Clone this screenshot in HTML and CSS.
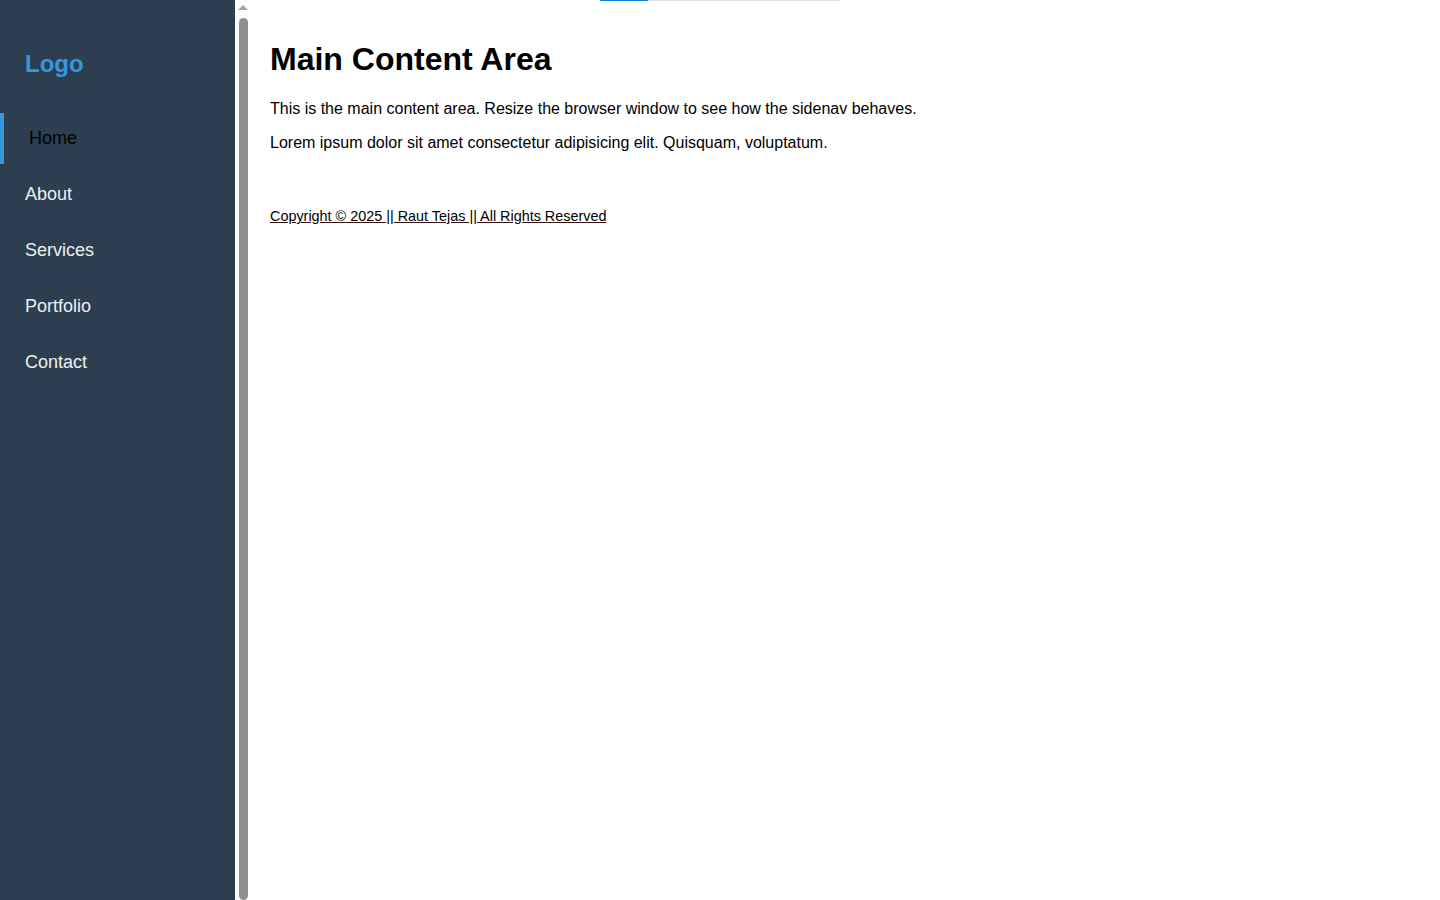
FILE: index.html
```html
<!DOCTYPE html>
<html lang="en">
<head>
<meta charset="UTF-8">
<title>Sidenav</title>
<link rel="stylesheet" href="styles.css">
</head>
<body>
<div class="progress"><span class="progress-fill"></span></div>
<aside class="sidebar">
  <nav class="sidenav">
    <h2 class="logo">Logo</h2>
    <ul class="menu">
      <li class="menu-item active"><a href="#">Home</a></li>
      <li class="menu-item"><a href="#">About</a></li>
      <li class="menu-item"><a href="#">Services</a></li>
      <li class="menu-item"><a href="#">Portfolio</a></li>
      <li class="menu-item"><a href="#">Contact</a></li>
    </ul>
  </nav>
  <div class="scrollbar">
    <span class="scroll-arrow"></span>
    <span class="scroll-thumb"></span>
  </div>
</aside>
<main class="main">
  <h1 class="title">Main Content Area</h1>
  <p class="text">This is the main content area. Resize the browser window to see how the sidenav behaves.</p>
  <p class="text">Lorem ipsum dolor sit amet consectetur adipisicing elit. Quisquam, voluptatum.</p>
  <footer class="footer">
    <p class="copy"><a href="#">Copyright © 2025 || Raut Tejas || All Rights Reserved</a></p>
  </footer>
</main>
</body>
</html>
```
FILE: styles.css
```css
* { box-sizing: border-box; }
html, body { margin: 0; padding: 0; height: 100%; }
body {
  display: flex;
  font-family: "Liberation Sans", Arial, sans-serif;
  background: #ffffff;
  color: #000000;
  overflow: hidden;
}
.progress {
  position: absolute;
  top: 0;
  left: 600px;
  width: 241px;
  height: 1px;
  background: #e2e2e2;
  display: flex;
}
.progress-fill {
  width: 48px;
  height: 1px;
  background: #0a7bd6;
}
.sidebar {
  width: 250px;
  flex: 0 0 250px;
  height: 900px;
  display: flex;
}
.sidenav {
  width: 235px;
  background: #2c3e50;
  height: 100%;
  padding-top: 50px;
}
.logo {
  margin: 0 0 35px 0;
  padding-left: 25px;
  font-size: 24px;
  font-weight: bold;
  line-height: 28px;
  color: #3498db;
}
.menu {
  list-style: none;
  margin: 0;
  padding: 0;
}
.menu-item {
  margin-bottom: 5px;
}
.menu-item a {
  display: block;
  padding: 15px 25px;
  font-size: 18px;
  line-height: 21px;
  color: #ecf0f1;
  text-decoration: none;
}
.menu-item.active a {
  border-left: 4px solid #3498db;
  color: #000000;
}
.scrollbar {
  width: 15px;
  background: #fdfdfd;
  display: flex;
  flex-direction: column;
  align-items: center;
  padding-top: 5px;
}
.scroll-arrow {
  width: 0;
  height: 0;
  border-left: 5px solid transparent;
  border-right: 5px solid transparent;
  border-bottom: 5px solid #a3a3a3;
  margin-left: 1px;
}
.scroll-thumb {
  margin-top: 8px;
  width: 9px;
  margin-left: 1px;
  flex: 1;
  background: #8f8f8f;
  border-radius: 5px;
}
.main {
  flex: 1;
  padding: 20px;
}
.title {
  font-size: 32px;
  font-weight: bold;
  margin: 21px 0 22px 0;
}
.text {
  font-size: 16px;
  margin: 16px 0;
}
.footer {
  margin-top: 56px;
}
.copy {
  font-size: 14.4px;
  margin: 16px 0;
}
.copy a {
  color: #000000;
  text-decoration: underline;
  text-decoration-color: #3b1010;
}
```
